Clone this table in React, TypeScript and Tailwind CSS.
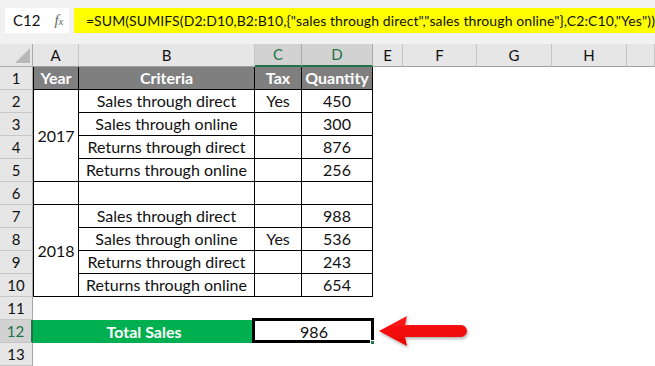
import React from 'react';

type Line = { row: string; criteria: string; tax: string; qty: number };

const firstYear: Line[] = [
  { row: 'row-start-3', criteria: 'Sales through direct', tax: 'Yes', qty: 450 },
  { row: 'row-start-4', criteria: 'Sales through online', tax: '', qty: 300 },
  { row: 'row-start-5', criteria: 'Returns through direct', tax: '', qty: 876 },
  { row: 'row-start-6', criteria: 'Returns through online', tax: '', qty: 256 },
];

const secondYear: Line[] = [
  { row: 'row-start-8', criteria: 'Sales through direct', tax: '', qty: 988 },
  { row: 'row-start-9', criteria: 'Sales through online', tax: 'Yes', qty: 536 },
  { row: 'row-start-10', criteria: 'Returns through direct', tax: '', qty: 243 },
  { row: 'row-start-11', criteria: 'Returns through online', tax: '', qty: 654 },
];

const rowStarts = [
  'row-start-2', 'row-start-3', 'row-start-4', 'row-start-5', 'row-start-6', 'row-start-7', 'row-start-8',
  'row-start-9', 'row-start-10', 'row-start-11', 'row-start-12', 'row-start-13', 'row-start-14',
];

const columns = ['A', 'B', 'C', 'D', 'E', 'F', 'G', 'H', ''];

const cell = 'flex items-center justify-center border-r border-b border-black text-[16px]';

const RedArrow = () => (
  <svg className="absolute left-[376px] top-[313px]" width="96" height="38" viewBox="0 0 96 38">
    <defs>
      <linearGradient id="arrowFill" x1="0" y1="0" x2="0" y2="1">
        <stop offset="0" stopColor="#ff1a1a" />
        <stop offset="1" stopColor="#e80000" />
      </linearGradient>
      <filter id="arrowShadow" x="-10%" y="-20%" width="130%" height="160%">
        <feDropShadow dx="1" dy="2" stdDeviation="1.5" floodColor="#000" floodOpacity="0.3" />
      </filter>
    </defs>
    <path
      d="M3 18 L31 3 L29 12 L85 12 A6 6 0 0 1 85 24 L29 24 L31 33 Z"
      fill="url(#arrowFill)"
      filter="url(#arrowShadow)"
    />
  </svg>
);

const YearBlock = ({ year, start, lines }: { year: string; start: string; lines: Line[] }) => (
  <>
    <div className={`col-start-2 ${start} row-span-4 ${cell} border-l`}>{year}</div>
    {lines.map((l) => (
      <React.Fragment key={l.row}>
        <div className={`col-start-3 ${l.row} ${cell}`}>{l.criteria}</div>
        <div className={`col-start-4 ${l.row} ${cell}`}>{l.tax}</div>
        <div className={`col-start-5 ${l.row} ${cell}`}>{l.qty}</div>
      </React.Fragment>
    ))}
  </>
);

export default function App() {
  return (
    <div className="relative w-[655px] h-[366px] overflow-hidden bg-white font-[Lato,sans-serif] text-[15px] text-[#111]">
      {/* formula bar */}
      <div className="h-[44px] bg-[#f1f1f1] pt-[8px] flex gap-[5px] pl-[5px]">
        <div className="w-[68px] h-[25px] bg-white flex items-center pl-[8px] gap-[14px]">
          <span>C12</span>
          <span className="font-[Liberation_Serif,serif] italic text-[#666] text-[15px] leading-none">
            f<span className="text-[11px]">x</span>
          </span>
        </div>
        <div className="flex-1 h-[25px] bg-[#ffff00] flex items-center pl-[12px] whitespace-nowrap text-[14px] tracking-[0.1px]">
          =SUM(SUMIFS(D2:D10,B2:B10,{'{'}"sales through direct","sales through online"{'}'},C2:C10,"Yes"))
        </div>
      </div>

      {/* sheet grid */}
      <div className="grid grid-cols-[33px_46px_176px_47px_71px_30px_74px_75px_75px_28px] grid-rows-[23px_repeat(13,23px)]">
        <div className="row-start-1 col-start-1 relative bg-[#e6e6e6] border-r border-b border-[#ababab]">
          <div className="absolute right-[2px] bottom-[3px] w-0 h-0 border-l-[15px] border-l-transparent border-b-[15px] border-b-[#b8b8b8]" />
        </div>
        {columns.map((c, i) =>
          c === 'C' || c === 'D' ? (
            <div
              key={i}
              className="row-start-1 flex items-center justify-center bg-[#d2d2d2] text-[#217346] border-r border-[#ababab] border-b-2 border-b-[#217346]"
            >
              {c}
            </div>
          ) : (
            <div
              key={i}
              className="row-start-1 flex items-center justify-center bg-[#e6e6e6] border-r border-[#c6c6c6] border-b border-b-[#9e9e9e]"
            >
              {c}
            </div>
          )
        )}

        {rowStarts.map((r, i) =>
          i === 11 ? (
            <div
              key={r}
              className={`col-start-1 ${r} flex items-center justify-center bg-[#d2d2d2] text-[#217346] border-b border-[#c6c6c6] border-r-2 border-r-[#217346]`}
            >
              {i + 1}
            </div>
          ) : (
            <div
              key={r}
              className={`col-start-1 ${r} flex items-center justify-center bg-[#e6e6e6] border-b border-[#c6c6c6] border-r border-r-[#a6a6a6]`}
            >
              {i + 1}
            </div>
          )
        )}

        {/* header row */}
        <div className={`col-start-2 row-start-2 ${cell} border-l bg-[#7f7f7f] text-white font-bold`}>Year</div>
        <div className={`col-start-3 row-start-2 ${cell} bg-[#7f7f7f] text-white font-bold`}>Criteria</div>
        <div className={`col-start-4 row-start-2 ${cell} bg-[#7f7f7f] text-white font-bold`}>Tax</div>
        <div className={`col-start-5 row-start-2 ${cell} bg-[#7f7f7f] text-white font-bold`}>Quantity</div>

        <YearBlock year="2017" start="row-start-3" lines={firstYear} />

        <div className={`col-start-2 row-start-7 ${cell} border-l`} />
        <div className={`col-start-3 row-start-7 ${cell}`} />
        <div className={`col-start-4 row-start-7 ${cell}`} />
        <div className={`col-start-5 row-start-7 ${cell}`} />

        <YearBlock year="2018" start="row-start-8" lines={secondYear} />

        {/* totals */}
        <div className="col-start-2 col-span-2 row-start-13 flex items-center justify-center bg-[#00b050] text-white font-bold text-[16px]">
          Total Sales
        </div>
        <div className="col-start-4 col-span-2 row-start-13 relative flex items-center justify-center text-[16px]">
          <div className="absolute -left-[3px] -top-[2px] -right-[1px] bottom-0 border-[3px] border-black" />
          <div className="absolute -right-[2px] -bottom-[2px] w-[5px] h-[5px] bg-[#217346] border border-white" />
          <span className="relative">986</span>
        </div>
      </div>

      <RedArrow />
    </div>
  );
}
